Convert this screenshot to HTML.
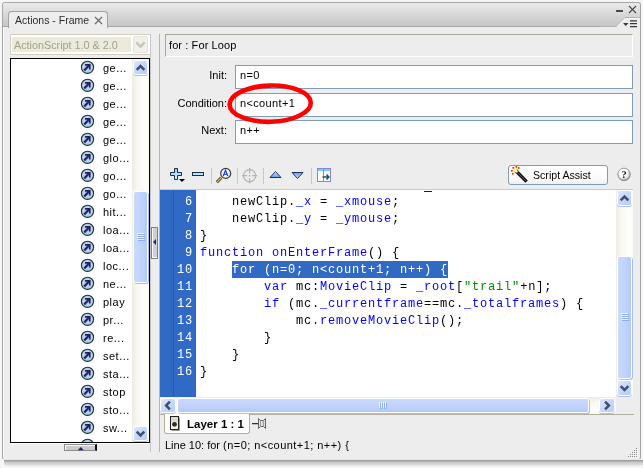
<!DOCTYPE html>
<html><head><meta charset="utf-8">
<style>
*{margin:0;padding:0;box-sizing:border-box}
html,body{width:643px;height:468px;overflow:hidden;background:#f6f6f6;font-family:"Liberation Sans",sans-serif;font-size:11px;color:#000}
.a{position:absolute}
.lbl{font-size:11px;line-height:13px;white-space:pre;will-change:transform}
.code{will-change:transform;font-family:"Liberation Mono",monospace;font-size:12px;letter-spacing:0.8px;line-height:17px;white-space:pre;color:#000}
.sbb{border-radius:2px;background:linear-gradient(135deg,#dce7fe,#c3d5fb 60%,#b9cdf9);box-shadow:0 0 0 1px #fff,0 1px 0 1px #adc1ec}
.sbtv{border-radius:2px;background:linear-gradient(90deg,#cadafd,#bfd2fb 60%,#b4cbf9);box-shadow:0 0 0 1px #fff,1px 1px 0 1px #a9bfeb}
.sbth{border-radius:2px;background:linear-gradient(#cad9fd,#bfd2fb 60%,#b1cafa);box-shadow:0 0 0 1px #fff,1px 1px 0 1px #a9bfeb}
.k{color:#0000ff}.s{color:#008800}
.li{position:absolute;left:81px;width:60px;height:18px}
.li svg{position:absolute;left:-1px;top:0}
.li span{will-change:transform;position:absolute;left:22px;top:2px;font-size:11px;line-height:13px;letter-spacing:0.5px}
</style></head><body>
<!-- shadow -->
<div class="a" style="left:4px;top:460px;width:639px;height:7px;border-radius:0 0 4px 4px;background:linear-gradient(#959595,#c8c8c8 35%,#f6f6f6)"></div>
<!-- frame -->
<div class="a" style="left:2px;top:2px;width:639px;height:458px;border:1px solid #a6a6a6;border-bottom-color:#e6e6e6;border-radius:3px 3px 3px 3px;background:#ededed;box-shadow:inset 1px 0 0 #fafafa"></div>
<!-- header strip -->
<div class="a" style="left:3px;top:3px;width:637px;height:23px;border-radius:3px 3px 0 0;background:linear-gradient(#eaeaea,#c6c6c6)"></div>
<div class="a" style="left:3px;top:26px;width:637px;height:1px;background:#a8a8a8"></div>
<!-- right notch -->
<svg class="a" style="left:600px;top:16px" width="40" height="12"><path d="M0 10.5 L16 10.5 L25 1.5 L40 1.5" fill="none" stroke="#b4b4b4" stroke-width="1"/><path d="M0 11 L16 11 L25 2 L40 2 L40 12 L0 12Z" fill="#ededed"/><path d="M17 11 L25.3 2.7 L40 2.7" fill="none" stroke="#f8f8f8" stroke-width="1"/></svg>
<!-- tab -->
<div class="a" style="left:8px;top:11px;width:100px;height:17px;background:#ededed;border:1px solid #a2a2a2;border-bottom:none;border-radius:4px 4px 0 0"></div>
<div class="a lbl" style="left:15px;top:14px;color:#2b2b2b;font-size:10.5px;line-height:13px">Actions - Frame</div>
<svg class="a" style="left:94px;top:16px" width="9" height="9"><path d="M1 1L8 8M8 1L1 8" stroke="#6a6a6a" stroke-width="1.2"/></svg>
<!-- minimize/close -->
<div class="a" style="left:616px;top:10px;width:7px;height:2px;background:#4a4a4a"></div>
<svg class="a" style="left:628px;top:5px" width="9" height="9"><path d="M1 1L8 8M8 1L1 8" stroke="#4a4a4a" stroke-width="1.1"/></svg>
<!-- menu icon -->
<svg class="a" style="left:622px;top:19px" width="16" height="10"><path d="M1 4h5.5l-2.75 3z" fill="#3a3a3a"/><path d="M8 1.8h7M8 4.7h7M8 7.6h7" stroke="#3a3a3a" stroke-width="1.3"/></svg>

<!-- ============ LEFT PANEL ============ -->
<!-- dropdown -->
<div class="a" style="left:10px;top:34px;width:141px;height:21px;border:1px solid #d2cfc0;background:#fff"></div>
<div class="a" style="left:12px;top:37px;width:119px;height:15px;background:#ebeadb"></div>
<div class="a lbl" style="left:14px;top:39px;color:#a3a08c;font-size:10.8px">ActionScript 1.0 &amp; 2.0</div>
<div class="a" style="left:133px;top:36px;width:15px;height:17px;border:1px solid #e6e4da;background:#f1f0ea;border-radius:2px"></div>
<svg class="a" style="left:134px;top:40px" width="13" height="10"><path d="M2.3 2.3L6.5 6.5L10.7 2.3" fill="none" stroke="#c8c6b8" stroke-width="2.4"/></svg>
<!-- listbox -->
<div class="a" style="left:10px;top:58px;width:140px;height:385px;border:1px solid #000;background:#fff;overflow:hidden">
</div>
<!-- list items -->
<svg width="0" height="0" style="position:absolute"><defs>
<symbol id="ic"><circle cx="7.5" cy="7.3" r="6.1" fill="#b4d0f4" stroke="#123a26" stroke-width="1.1"/><path d="M5 4.85H9.75V9.6" fill="none" stroke="#2a1e5c" stroke-width="1.7"/><path d="M4.2 10.5L9.4 5.1" stroke="#2a1e5c" stroke-width="2.2"/></symbol>
</defs></svg>
<div class="a" style="left:11px;top:59px;width:138px;height:383px;overflow:hidden"><div style="position:absolute;left:-11px;top:-59px;width:200px;height:600px"><div class="li" style="top:60px"><svg width="16" height="16"><use href="#ic"/></svg><span>ge...</span></div>
<div class="li" style="top:78px"><svg width="16" height="16"><use href="#ic"/></svg><span>ge...</span></div>
<div class="li" style="top:96px"><svg width="16" height="16"><use href="#ic"/></svg><span>ge...</span></div>
<div class="li" style="top:114px"><svg width="16" height="16"><use href="#ic"/></svg><span>ge...</span></div>
<div class="li" style="top:132px"><svg width="16" height="16"><use href="#ic"/></svg><span>ge...</span></div>
<div class="li" style="top:150px"><svg width="16" height="16"><use href="#ic"/></svg><span>glo...</span></div>
<div class="li" style="top:168px"><svg width="16" height="16"><use href="#ic"/></svg><span>go...</span></div>
<div class="li" style="top:186px"><svg width="16" height="16"><use href="#ic"/></svg><span>go...</span></div>
<div class="li" style="top:204px"><svg width="16" height="16"><use href="#ic"/></svg><span>hit...</span></div>
<div class="li" style="top:222px"><svg width="16" height="16"><use href="#ic"/></svg><span>loa...</span></div>
<div class="li" style="top:240px"><svg width="16" height="16"><use href="#ic"/></svg><span>loa...</span></div>
<div class="li" style="top:258px"><svg width="16" height="16"><use href="#ic"/></svg><span>loc...</span></div>
<div class="li" style="top:276px"><svg width="16" height="16"><use href="#ic"/></svg><span>ne...</span></div>
<div class="li" style="top:294px"><svg width="16" height="16"><use href="#ic"/></svg><span>play</span></div>
<div class="li" style="top:312px"><svg width="16" height="16"><use href="#ic"/></svg><span>pr...</span></div>
<div class="li" style="top:330px"><svg width="16" height="16"><use href="#ic"/></svg><span>re...</span></div>
<div class="li" style="top:348px"><svg width="16" height="16"><use href="#ic"/></svg><span>set...</span></div>
<div class="li" style="top:366px"><svg width="16" height="16"><use href="#ic"/></svg><span>sta...</span></div>
<div class="li" style="top:384px"><svg width="16" height="16"><use href="#ic"/></svg><span>stop</span></div>
<div class="li" style="top:402px"><svg width="16" height="16"><use href="#ic"/></svg><span>sto...</span></div>
<div class="li" style="top:420px"><svg width="16" height="16"><use href="#ic"/></svg><span>sw...</span></div>
<div class="li" style="top:438px"><svg width="16" height="16"><use href="#ic"/></svg><span></span></div>
</div></div>
<!-- list scrollbar -->
<div class="a" style="left:132px;top:59px;width:17px;height:383px;background:linear-gradient(90deg,#eeece3,#f9f8f3 35%,#fdfdfa 75%,#fbfbf8)"></div>
<div class="a sbb" style="left:134px;top:61px;width:13px;height:13px"></div>
<svg class="a" style="left:0;top:0;overflow:visible" width="1" height="1"><path d="M136.7 69.8L140.5 66.0L144.3 69.8" fill="none" stroke="#3f4f74" stroke-width="2.5" stroke-linejoin="miter"/></svg>
<div class="a sbtv" style="left:134px;top:192px;width:13px;height:90px"></div>
<div class="a" style="left:137px;top:233px;width:7px;height:1px;background:#eef3fe"></div><div class="a" style="left:138px;top:234px;width:7px;height:1px;background:#8caef0"></div>
<div class="a" style="left:137px;top:235px;width:7px;height:1px;background:#eef3fe"></div><div class="a" style="left:138px;top:236px;width:7px;height:1px;background:#8caef0"></div>
<div class="a" style="left:137px;top:237px;width:7px;height:1px;background:#eef3fe"></div><div class="a" style="left:138px;top:238px;width:7px;height:1px;background:#8caef0"></div>
<div class="a" style="left:137px;top:239px;width:7px;height:1px;background:#eef3fe"></div><div class="a" style="left:138px;top:240px;width:7px;height:1px;background:#8caef0"></div>
<div class="a sbb" style="left:134px;top:427px;width:13px;height:13px"></div>
<svg class="a" style="left:0;top:0;overflow:visible" width="1" height="1"><path d="M136.7 431.6L140.5 435.4L144.3 431.6" fill="none" stroke="#3f4f74" stroke-width="2.5" stroke-linejoin="miter"/></svg>
<div class="a" style="left:10px;top:443px;width:141px;height:1px;background:#fff"></div>
<!-- small bottom handle -->
<div class="a" style="left:64px;top:444px;width:33px;height:7px;border:1px solid #8c8c8c;border-right:2px solid #111;background:#cbcbcb;box-shadow:inset 1px 1px 0 #fafafa"></div>
<svg class="a" style="left:77px;top:446px" width="8" height="5"><path d="M0.8 4.2h6L3.8 1z" fill="#1e2466"/></svg>
<!-- splitter -->
<div class="a" style="left:150px;top:34px;width:1px;height:418px;background:#c5c5c5"></div>
<div class="a" style="left:159px;top:34px;width:1px;height:418px;background:#b9b3a8"></div>
<div class="a" style="left:151px;top:227px;width:7px;height:32px;border:1px solid #808080;background:#d0d0d0;box-shadow:inset 1px -1px 0 #fafafa"></div>
<svg class="a" style="left:152px;top:238px" width="5" height="8"><path d="M4 1v6L1 4z" fill="#1b2a6b"/></svg>

<!-- ============ RIGHT PANEL ============ -->
<!-- for box -->
<div class="a" style="left:165px;top:34px;width:468px;height:23px;border:1px solid;border-color:#aca899 #fff #fff #aca899;background:#ededed"></div>
<div class="a lbl" style="left:169px;top:39px;letter-spacing:0.1px">for : For Loop</div>
<!-- labels -->
<div class="a lbl" style="left:207px;top:69px;width:20px;text-align:right">Init:</div>
<div class="a lbl" style="left:170px;top:97px;width:57px;text-align:right">Condition:</div>
<div class="a lbl" style="left:180px;top:124px;width:47px;text-align:right">Next:</div>
<!-- inputs -->
<div class="a" style="left:235px;top:65px;width:398px;height:24px;border:1px solid #7f9db9;background:#fff"></div>
<div class="a" style="left:235px;top:93px;width:398px;height:24px;border:1px solid #7f9db9;background:#fff"></div>
<div class="a" style="left:235px;top:120px;width:398px;height:24px;border:1px solid #7f9db9;background:#fff"></div>
<div class="a lbl" style="left:240px;top:69px;letter-spacing:0.35px">n=0</div>
<div class="a lbl" style="left:240px;top:97px;letter-spacing:0.35px">n&lt;count+1</div>
<div class="a lbl" style="left:240px;top:124px;letter-spacing:0.35px">n++</div>
<!-- red ellipse -->
<svg class="a" style="left:224px;top:80px" width="95" height="48"><ellipse cx="46.2" cy="23.7" rx="40.6" ry="18.1" fill="none" stroke="#ff0000" stroke-width="4.6" transform="rotate(-1.5 46.2 23.7)"/></svg>
<!-- toolbar -->
<svg class="a" style="left:168px;top:166px" width="20" height="20">
 <defs><linearGradient id="gb" x1="0" y1="0" x2="0" y2="1"><stop offset="0" stop-color="#8ec6f8"/><stop offset="1" stop-color="#d6f4ff"/></linearGradient></defs>
 <path d="M7.5 3.5H9.5V7.5H13.5V9.5H9.5V13.5H7.5V9.5H3.5V7.5H7.5Z" fill="none" stroke="#b8b8b8" stroke-width="1"/>
 <path d="M6.5 2.5H9.5V6.5H13.5V9.5H9.5V13.5H6.5V9.5H2.5V6.5H6.5Z" fill="url(#gb)" stroke="#1a2f4a" stroke-width="1"/>
 <path d="M11 13h6l-3 3z" fill="#000"/>
</svg>
<svg class="a" style="left:190px;top:170px" width="16" height="8"><rect x="3" y="3" width="11" height="3" fill="#b8b8b8"/><rect x="2.5" y="2.5" width="11" height="3" fill="#b9e2fd" stroke="#1a2f4a" stroke-width="1"/></svg>
<div class="a" style="left:211px;top:168px;width:1px;height:16px;background:#c8c8c8"></div>
<svg class="a" style="left:214px;top:166px" width="20" height="20">
 <path d="M2.8 16.2L7.2 11.8" stroke="#2a2a2a" stroke-width="3"/>
 <path d="M2.8 16.2L7.2 11.8" stroke="#e8c040" stroke-width="1.3"/>
 <circle cx="11.7" cy="7.4" r="5" fill="#e6f6ff" stroke="#3a3a3a" stroke-width="1.2"/>
 <path d="M9.2 10L11.5 4.2L13.8 10M10 8.3h3" fill="none" stroke="#1830d8" stroke-width="1.1"/>
</svg>
<div class="a" style="left:237px;top:168px;width:1px;height:16px;background:#c8c8c8"></div>
<svg class="a" style="left:241px;top:167px" width="17" height="17">
 <circle cx="8.6" cy="8.7" r="6.1" fill="none" stroke="#b4b4b4" stroke-width="1.2"/>
 <path d="M8.6 1v5.2M8.6 11.2v5.2M1 8.7h5.2M11 8.7h5.2" stroke="#b4b4b4" stroke-width="1.2"/>
 <circle cx="8.6" cy="8.7" r="0.9" fill="#b4b4b4"/>
</svg>
<div class="a" style="left:263px;top:168px;width:1px;height:16px;background:#c8c8c8"></div>
<svg class="a" style="left:268px;top:169px" width="15" height="11">
 <defs><linearGradient id="gu" x1="0" y1="0" x2="0" y2="1"><stop offset="0" stop-color="#d0e8ff"/><stop offset="1" stop-color="#5f98ee"/></linearGradient>
 <linearGradient id="gd" x1="0" y1="0" x2="0" y2="1"><stop offset="0" stop-color="#5f98ee"/><stop offset="1" stop-color="#d0e8ff"/></linearGradient></defs>
 <path d="M2 8.5L7.5 2.5L13 8.5z" fill="url(#gu)" stroke="#22306a" stroke-width="1"/></svg>
<svg class="a" style="left:290px;top:170px" width="15" height="11"><path d="M2 2.5L7.5 8.5L13 2.5z" fill="url(#gd)" stroke="#22306a" stroke-width="1"/></svg>
<div class="a" style="left:311px;top:168px;width:1px;height:16px;background:#c8c8c8"></div>
<svg class="a" style="left:316px;top:167px" width="17" height="17">
 <rect x="1.5" y="1.5" width="13" height="13" fill="#fff" stroke="#8a84d8" stroke-width="1"/>
 <rect x="2" y="2" width="12" height="2" fill="#70d4f4"/>
 <path d="M7.5 2v12.5" stroke="#8a84d8"/>
 <path d="M6.5 10h6M10.5 7.5l2.3 2.5L10.5 12.5" fill="none" stroke="#1b5560" stroke-width="1.6"/>
</svg>
<!-- Script Assist -->
<div class="a" style="left:508px;top:165px;width:100px;height:20px;border:1px solid #7f9cb6;border-radius:3px;background:linear-gradient(#ffffff,#fbfbfb 70%,#f0f0ee)"></div>
<svg class="a" style="left:508px;top:163px" width="22" height="22">
 <circle cx="7.5" cy="7.5" r="3.2" fill="#f4f060" opacity="0.8"/>
 <path d="M7.8 7.8L18.6 18.6" stroke="#111" stroke-width="3.4"/>
 <path d="M9 9L18 18" stroke="#6a6a6a" stroke-width="0.8"/>
 <path d="M6.3 6.3L9.2 9.2" stroke="#f2f2f2" stroke-width="2.6"/>
 <g fill="#ff1a00"><rect x="3" y="7" width="1.6" height="1.6"/><rect x="4.5" y="4" width="1.6" height="1.6"/><rect x="7.5" y="3" width="1.6" height="1.6"/><rect x="10" y="4.2" width="1.6" height="1.6"/><rect x="4" y="10" width="1.6" height="1.6"/></g>
</svg>
<div class="a lbl" style="left:533px;top:169px;font-size:10.6px">Script Assist</div>
<!-- help -->
<svg class="a" style="left:616px;top:167px;will-change:transform" width="16" height="16">
 <defs><radialGradient id="hg" cx="0.45" cy="0.4" r="0.62"><stop offset="0.5" stop-color="#ffffff"/><stop offset="0.8" stop-color="#c4c4c4"/><stop offset="1" stop-color="#707070"/></radialGradient></defs>
 <circle cx="8" cy="7.3" r="6.6" fill="url(#hg)"/>
 <circle cx="8" cy="7.3" r="6.1" fill="none" stroke="#8a8a8a" stroke-width="0.8"/>
 <text x="8" y="11.2" font-family="Liberation Serif" font-size="10.5" font-weight="bold" text-anchor="middle" fill="#111">?</text>
</svg>
<!-- code area -->
<div class="a" style="left:160px;top:189px;width:473px;height:1px;background:#c9c9c9"></div>
<div class="a" style="left:160px;top:190px;width:456px;height:207px;background:#fff;overflow:hidden">
 <div class="a" style="left:0;top:0;width:36px;height:207px;background:#316ac5"></div>
 <div class="a" style="left:13px;top:0;width:1px;height:207px;background:#2a5aa8"></div>
 <div class="a" style="left:72px;top:71px;width:216px;height:17px;background:#316ac5"></div>
 <div class="a" style="left:264px;top:1px;width:8px;height:1px;background:#0000ff"></div>
 <div class="a code" style="left:3px;top:-13px;width:30px;text-align:right;color:#fff">5
6
7
8
9
10
11
12
13
14
15
16</div>
 <div class="a code" style="left:40px;top:-13px">
    newClip.<span class="k">_x</span> = <span class="k">_xmouse</span>;
    newClip.<span class="k">_y</span> = <span class="k">_ymouse</span>;
}
<span class="k">function</span> <span class="k">onEnterFrame</span>() {
<span style="color:#fff">    for (n=0; n&lt;count+1; n++) {</span>
        <span class="k">var</span> mc:<span class="k">MovieClip</span> = <span class="k">_root</span>[<span class="s">"trail"</span>+n];
        <span class="k">if</span> (mc.<span class="k">_currentframe</span>==mc.<span class="k">_totalframes</span>) {
            mc<span class="k">.removeMovieClip</span>();
        }
    }
}</div>
</div>
<!-- vertical scrollbar -->
<div class="a" style="left:616px;top:190px;width:17px;height:207px;background:linear-gradient(90deg,#eeece3,#f9f8f3 35%,#fdfdfa 75%,#fbfbf8)"></div>
<div class="a sbb" style="left:618px;top:191px;width:13px;height:14px"></div>
<svg class="a" style="left:0;top:0;overflow:visible" width="1" height="1"><path d="M620.7 200.3L624.5 196.5L628.3 200.3" fill="none" stroke="#3f4f74" stroke-width="2.5" stroke-linejoin="miter"/></svg>
<div class="a sbtv" style="left:618px;top:257px;width:13px;height:121px"></div>
<div class="a" style="left:621px;top:313px;width:7px;height:1px;background:#eef3fe"></div><div class="a" style="left:622px;top:314px;width:7px;height:1px;background:#8caef0"></div>
<div class="a" style="left:621px;top:315px;width:7px;height:1px;background:#eef3fe"></div><div class="a" style="left:622px;top:316px;width:7px;height:1px;background:#8caef0"></div>
<div class="a" style="left:621px;top:317px;width:7px;height:1px;background:#eef3fe"></div><div class="a" style="left:622px;top:318px;width:7px;height:1px;background:#8caef0"></div>
<div class="a" style="left:621px;top:319px;width:7px;height:1px;background:#eef3fe"></div><div class="a" style="left:622px;top:320px;width:7px;height:1px;background:#8caef0"></div>
<div class="a sbb" style="left:618px;top:381px;width:13px;height:14px"></div>
<svg class="a" style="left:0;top:0;overflow:visible" width="1" height="1"><path d="M620.7 386.1L624.5 389.9L628.3 386.1" fill="none" stroke="#3f4f74" stroke-width="2.5" stroke-linejoin="miter"/></svg>
<!-- horizontal scrollbar -->
<div class="a" style="left:160px;top:397px;width:456px;height:17px;background:linear-gradient(#eeece3,#f9f8f3 35%,#fdfdfa 75%,#f8f7f2)"></div>
<div class="a sbb" style="left:161px;top:399px;width:14px;height:13px"></div>
<svg class="a" style="left:0;top:0;overflow:visible" width="1" height="1"><path d="M169.9 401.7L166.1 405.5L169.9 409.3" fill="none" stroke="#3f4f74" stroke-width="2.5" stroke-linejoin="miter"/></svg>
<div class="a sbth" style="left:178px;top:399px;width:410px;height:13px"></div>
<div class="a" style="left:379px;top:402px;width:1px;height:6px;background:#eef3fe"></div><div class="a" style="left:380px;top:403px;width:1px;height:6px;background:#8caef0"></div>
<div class="a" style="left:381px;top:402px;width:1px;height:6px;background:#eef3fe"></div><div class="a" style="left:382px;top:403px;width:1px;height:6px;background:#8caef0"></div>
<div class="a" style="left:383px;top:402px;width:1px;height:6px;background:#eef3fe"></div><div class="a" style="left:384px;top:403px;width:1px;height:6px;background:#8caef0"></div>
<div class="a" style="left:385px;top:402px;width:1px;height:6px;background:#eef3fe"></div><div class="a" style="left:386px;top:403px;width:1px;height:6px;background:#8caef0"></div>
<div class="a sbb" style="left:600px;top:399px;width:14px;height:13px"></div>
<svg class="a" style="left:0;top:0;overflow:visible" width="1" height="1"><path d="M605.1 401.7L608.9 405.5L605.1 409.3" fill="none" stroke="#3f4f74" stroke-width="2.5" stroke-linejoin="miter"/></svg>
<!-- layer tab bar -->
<div class="a" style="left:160px;top:414px;width:474px;height:1px;background:#b3b0a0"></div>
<div class="a" style="left:164px;top:414px;width:86px;height:20px;border:1px solid #b3b0a0;border-top:none;border-radius:0 0 3px 3px;background:#ffffff"></div>
<svg class="a" style="left:169px;top:415px" width="13" height="17">
 <path d="M10.5 2.5V15.5H2.5" fill="none" stroke="#9a9a9a" stroke-width="1"/>
 <rect x="1.5" y="1.5" width="8" height="13" fill="#f0efe0" stroke="#222" stroke-width="1"/>
 <rect x="2" y="2" width="7" height="5" fill="#dcdccb"/>
 <circle cx="5.5" cy="9.3" r="2.4" fill="#2a2a2a"/>
</svg>
<div class="a lbl" style="left:187px;top:418px;font-weight:bold;font-size:11.5px">Layer 1 : 1</div>
<svg class="a" style="left:251px;top:417px" width="16" height="13">
 <path d="M1 6.5h6" stroke="#333" stroke-width="1"/>
 <path d="M1 7.5h6" stroke="#bbb" stroke-width="1"/>
 <path d="M7.5 1.5L9.5 3.5H12.5L14.5 1.5V11.5L12.5 9.5H9.5L7.5 11.5Z" fill="#e0e0e0" stroke="#666" stroke-width="1"/>
 <path d="M9.5 3.5V9.5M12.5 3.5V9.5" stroke="#999" stroke-width="1"/>
</svg>
<!-- status -->
<div class="a lbl" style="left:165px;top:439px">Line 10: for <span style="letter-spacing:0.45px">(n=0; n&lt;count+1; n++) {</span></div>
<!-- resize grip -->
<svg class="a" style="left:624px;top:444px" width="16" height="16"><rect x="12" y="4" width="1" height="1" fill="#8a8a8a"/><rect x="13" y="5" width="1" height="1" fill="#fbfbfb"/><rect x="12" y="6" width="1" height="1" fill="#8a8a8a"/><rect x="13" y="7" width="1" height="1" fill="#fbfbfb"/><rect x="10" y="6" width="1" height="1" fill="#8a8a8a"/><rect x="11" y="7" width="1" height="1" fill="#fbfbfb"/><rect x="12" y="8" width="1" height="1" fill="#8a8a8a"/><rect x="13" y="9" width="1" height="1" fill="#fbfbfb"/><rect x="10" y="8" width="1" height="1" fill="#8a8a8a"/><rect x="11" y="9" width="1" height="1" fill="#fbfbfb"/><rect x="8" y="8" width="1" height="1" fill="#8a8a8a"/><rect x="9" y="9" width="1" height="1" fill="#fbfbfb"/><rect x="12" y="10" width="1" height="1" fill="#8a8a8a"/><rect x="13" y="11" width="1" height="1" fill="#fbfbfb"/><rect x="10" y="10" width="1" height="1" fill="#8a8a8a"/><rect x="11" y="11" width="1" height="1" fill="#fbfbfb"/><rect x="8" y="10" width="1" height="1" fill="#8a8a8a"/><rect x="9" y="11" width="1" height="1" fill="#fbfbfb"/><rect x="6" y="10" width="1" height="1" fill="#8a8a8a"/><rect x="7" y="11" width="1" height="1" fill="#fbfbfb"/><rect x="12" y="12" width="1" height="1" fill="#8a8a8a"/><rect x="13" y="13" width="1" height="1" fill="#fbfbfb"/><rect x="10" y="12" width="1" height="1" fill="#8a8a8a"/><rect x="11" y="13" width="1" height="1" fill="#fbfbfb"/><rect x="8" y="12" width="1" height="1" fill="#8a8a8a"/><rect x="9" y="13" width="1" height="1" fill="#fbfbfb"/><rect x="6" y="12" width="1" height="1" fill="#8a8a8a"/><rect x="7" y="13" width="1" height="1" fill="#fbfbfb"/><rect x="4" y="12" width="1" height="1" fill="#8a8a8a"/><rect x="5" y="13" width="1" height="1" fill="#fbfbfb"/></svg>

</body></html>
